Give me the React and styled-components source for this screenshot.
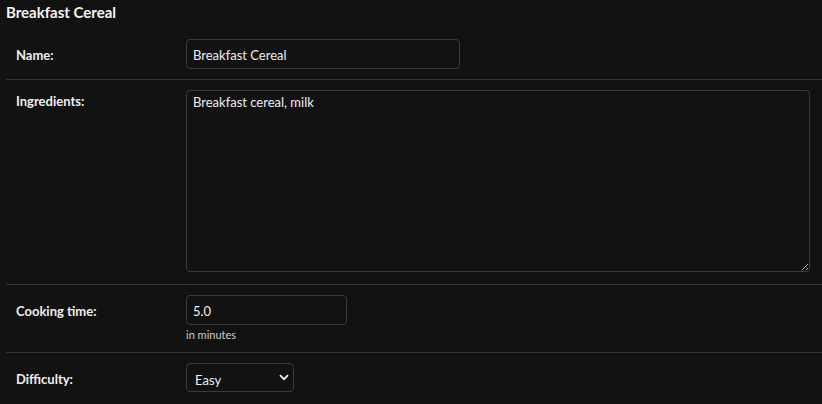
import React from 'react';
import styled, { createGlobalStyle } from 'styled-components';

const GlobalStyle = createGlobalStyle`
  html, body {
    margin: 0;
    padding: 0;
    background: #121212;
    color: #eeeeee;
    font-family: Lato, "Liberation Sans", sans-serif;
    font-size: 13px;
  }
`;

const Fieldset = styled.fieldset`
  border: none;
  margin: 0;
  padding: 0 0 0 6px;
`;

const Caption = styled.h2`
  margin: 0;
  padding: 4px 0 9px;
  font-size: 15px;
  line-height: 16px;
  font-weight: 700;
  color: #f5f5f5;
`;

const FormRow = styled.div`
  display: flex;
  align-items: flex-start;
  padding: 10px;
  border-bottom: 1px solid #353535;
  &:last-child {
    border-bottom: none;
  }
`;

const Label = styled.label`
  width: 170px;
  flex: none;
  padding-top: ${(p) => p.$top || 8}px;
  font-weight: 700;
  line-height: 16px;
  color: #eeeeee;
`;

const Field = styled.div`
  display: flex;
  flex-direction: column;
  flex: 1;
`;

const TextInput = styled.input`
  box-sizing: border-box;
  width: ${(p) => p.$w}px;
  height: 30px;
  padding: 6px 6px 4px;
  background: #121212;
  color: #eeeeee;
  border: 1px solid #3c3c3c;
  border-radius: 4px;
  font: inherit;
  font-size: 13px;
  outline: none;
`;

const TextArea = styled.textarea`
  box-sizing: border-box;
  width: 624px;
  height: 182px;
  margin-bottom: 2px;
  padding: 3px 6px;
  background: #121212;
  color: #eeeeee;
  border: 1px solid #3c3c3c;
  border-radius: 4px;
  font: inherit;
  font-size: 13px;
  line-height: 16px;
  resize: both;
  outline: none;
  display: block;
`;

const Help = styled.div`
  margin-top: 3px;
  font-size: 11px;
  line-height: 14px;
  color: #cccccc;
`;

const SelectWrap = styled.div`
  position: relative;
  width: 108px;
`;

const Select = styled.select`
  appearance: none;
  box-sizing: border-box;
  width: 108px;
  height: 29px;
  padding: 6px 8px 2px;
  background: #121212;
  color: #eeeeee;
  border: 1px solid #3c3c3c;
  border-radius: 4px;
  font: inherit;
  font-size: 13px;
  outline: none;
`;

const Chevron = styled.svg`
  position: absolute;
  right: 5px;
  top: 11px;
  pointer-events: none;
`;

export default function App() {
  return (
    <>
      <GlobalStyle />
      <Fieldset>
        <Caption>Breakfast Cereal</Caption>
        <FormRow>
          <Label>Name:</Label>
          <Field>
            <TextInput $w={274} defaultValue="Breakfast Cereal" />
          </Field>
        </FormRow>
        <FormRow>
          <Label $top={3}>Ingredients:</Label>
          <Field>
            <TextArea defaultValue="Breakfast cereal, milk" />
          </Field>
        </FormRow>
        <FormRow>
          <Label>Cooking time:</Label>
          <Field>
            <TextInput $w={161} defaultValue="5.0" />
            <Help>in minutes</Help>
          </Field>
        </FormRow>
        <FormRow>
          <Label>Difficulty:</Label>
          <Field>
            <SelectWrap>
              <Select defaultValue="easy">
                <option value="easy">Easy</option>
                <option value="medium">Medium</option>
                <option value="hard">Hard</option>
              </Select>
              <Chevron width="10" height="7" viewBox="0 0 10 7">
                <path d="M1 1.2 L5 5.2 L9 1.2" fill="none" stroke="#eeeeee" strokeWidth="1.8" />
              </Chevron>
            </SelectWrap>
          </Field>
        </FormRow>
      </Fieldset>
    </>
  );
}
